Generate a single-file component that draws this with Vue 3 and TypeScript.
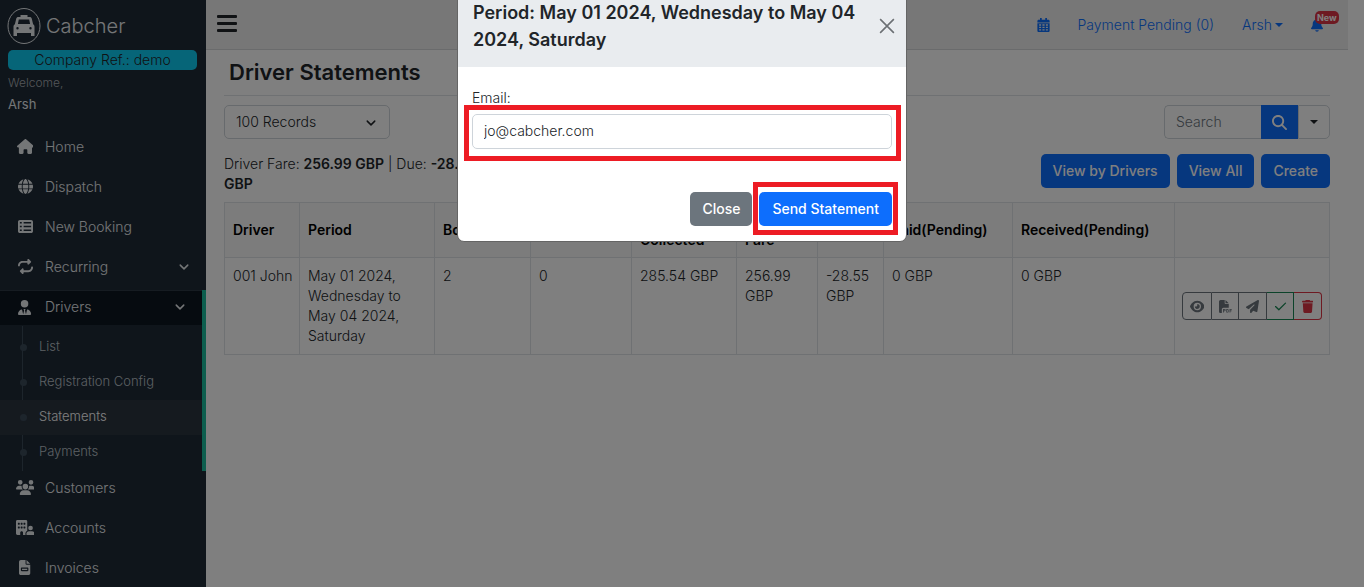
<script setup lang="ts">
import { ref } from 'vue'

interface Icon {
  box: string
  d: string
}

interface Column {
  title: string
  share: number
}

const icons: Record<string, Icon> = {
  home: {
    box: '0 0 576 512',
    d: 'M575.8 255.5c0 18-15 32.1-32 32.1h-32l.7 160.2c0 2.7-.2 5.4-.5 8.1V472c0 22.1-17.9 40-40 40H456c-1.1 0-2.2 0-3.3-.1c-1.4 .1-2.8 .1-4.2 .1H416 392c-22.1 0-40-17.9-40-40V448 384c0-17.7-14.3-32-32-32H256c-17.7 0-32 14.3-32 32v64 24c0 22.1-17.9 40-40 40H160 128.1c-1.5 0-3-.1-4.5-.2c-1.2 .1-2.4 .2-3.6 .2H104c-22.1 0-40-17.9-40-40V360c0-.9 0-1.9 .1-2.8V287.6H32c-18 0-32-14-32-32.1c0-9 3-17 10-24L266.4 8c7-7 15-8 22-8s15 2 21 7L564.8 231.5c8 7 12 15 11 24z',
  },
  globe: {
    box: '0 0 512 512',
    d: 'M352 256c0 22.2-1.2 43.6-3.3 64H163.3c-2.2-20.4-3.3-41.8-3.3-64s1.2-43.6 3.3-64H348.7c2.2 20.4 3.3 41.8 3.3 64zm28.8-64H503.9c5.3 20.5 8.1 41.9 8.1 64s-2.8 43.5-8.1 64H380.8c2.1-20.6 3.2-42 3.2-64s-1.1-43.4-3.2-64zm112.6-32H376.7c-10-63.9-29.8-117.4-55.3-151.6c78.3 20.7 142 77.5 171.9 151.6zm-149.1 0H167.7c6.1-36.4 15.5-68.6 27-94.7c10.5-23.6 22.2-40.7 33.5-51.5C239.4 3.2 248.7 0 256 0s16.6 3.2 27.8 13.8c11.3 10.8 23 27.9 33.5 51.5c11.6 26 20.9 58.2 27 94.7zm-209 0H18.6C48.6 85.9 112.2 29.1 190.6 8.4C165.1 42.6 145.3 96.1 135.3 160zM8.1 192H131.2c-2.1 20.6-3.2 42-3.2 64s1.1 43.4 3.2 64H8.1C2.8 299.5 0 278.1 0 256s2.8-43.5 8.1-64zM194.7 446.6c-11.6-26-20.9-58.2-27-94.6H344.3c-6.1 36.4-15.5 68.6-27 94.6c-10.5 23.6-22.2 40.7-33.5 51.5C272.6 508.8 263.3 512 256 512s-16.6-3.2-27.8-13.8c-11.3-10.8-23-27.9-33.5-51.5zM135.3 352c10 63.9 29.8 117.4 55.3 151.6C112.2 482.9 48.6 426.1 18.6 352H135.3zm358.1 0c-30 74.1-93.6 130.9-171.9 151.6c25.5-34.2 45.2-87.7 55.3-151.6H493.4z',
  },
  list: {
    box: '0 0 512 512',
    d: 'M0 96C0 60.7 28.7 32 64 32H448c35.3 0 64 28.7 64 64V416c0 35.3-28.7 64-64 64H64c-35.3 0-64-28.7-64-64V96zM64 104v48h64V104H64zM448 104H192v48H448V104zM64 232v48h64V232H64zM448 232H192v48H448V232zM64 360v48h64V360H64zM448 360H192v48H448V360z',
  },
  repeat: {
    box: '0 0 512 512',
    d: 'M0 224c0 17.7 14.3 32 32 32s32-14.3 32-32c0-53 43-96 96-96H320v32c0 12.9 7.8 24.6 19.8 29.6s25.7 2.2 34.9-6.9l64-64c12.5-12.5 12.5-32.8 0-45.3l-64-64c-9.2-9.2-22.9-11.9-34.9-6.9S320 19.1 320 32V64H160C71.6 64 0 135.6 0 224zm512 64c0-17.7-14.3-32-32-32s-32 14.3-32 32c0 53-43 96-96 96H192V352c0-12.9-7.8-24.6-19.8-29.6s-25.7-2.2-34.9 6.9l-64 64c-12.5 12.5-12.5 32.8 0 45.3l64 64c9.2 9.2 22.9 11.9 34.9 6.9s19.8-16.6 19.8-29.6V448H352c88.4 0 160-71.6 160-160z',
  },
  driver: {
    box: '0 0 448 512',
    d: 'M96 128a128 128 0 1 0 256 0A128 128 0 1 0 96 128zm94.5 200.2l18.6 31L175.8 483.1l-36-146.9c-2-8.1-9.8-13.4-17.9-11.3C51.9 342.4 0 405.8 0 481.3c0 17 13.8 30.7 30.7 30.7H162.5c0 0 0 0 .1 0H168 280h5.5c0 0 0 0 .1 0H417.3c17 0 30.7-13.8 30.7-30.7c0-75.5-51.9-138.9-121.9-156.4c-8.1-2-15.9 3.3-17.9 11.3l-36 146.9L238.9 359.2l18.6-31c6.4-10.7-1.3-24.2-13.7-24.2H224 204.3c-12.4 0-20.1 13.6-13.7 24.2z',
  },
  users: {
    box: '0 0 640 512',
    d: 'M144 0a80 80 0 1 1 0 160A80 80 0 1 1 144 0zM512 0a80 80 0 1 1 0 160A80 80 0 1 1 512 0zM0 298.7C0 239.8 47.8 192 106.7 192h42.7c15.9 0 31 3.5 44.6 9.7c-1.3 7.2-1.9 14.7-1.9 22.3c0 38.2 16.8 72.5 43.3 96c-.2 0-.4 0-.7 0H21.3C9.6 320 0 310.4 0 298.7zM405.3 320c-.2 0-.4 0-.7 0c26.6-23.5 43.3-57.8 43.3-96c0-7.6-.7-15-1.9-22.3c13.6-6.3 28.7-9.7 44.6-9.7h42.7C592.2 192 640 239.8 640 298.7c0 11.8-9.6 21.3-21.3 21.3H405.3zM224 224a96 96 0 1 1 192 0 96 96 0 1 1 -192 0zM128 485.3C128 411.7 187.7 352 261.3 352H378.7C452.3 352 512 411.7 512 485.3c0 14.7-11.9 26.7-26.7 26.7H154.7c-14.7 0-26.7-11.9-26.7-26.7z',
  },
  building: {
    box: '0 0 640 512',
    d: 'M48 0C21.5 0 0 21.5 0 48V464c0 26.5 21.5 48 48 48h96V432c0-26.5 21.5-48 48-48s48 21.5 48 48v80h89.9c-6.3-10.2-9.9-22.2-9.9-35.1c0-46.9 25.8-87.8 64-109.2V271.8 48c0-26.5-21.5-48-48-48H48zM64 240c0-8.8 7.2-16 16-16h32c8.8 0 16 7.2 16 16v32c0 8.8-7.2 16-16 16H80c-8.8 0-16-7.2-16-16V240zm112-16h32c8.8 0 16 7.2 16 16v32c0 8.8-7.2 16-16 16H176c-8.8 0-16-7.2-16-16V240c0-8.8 7.2-16 16-16zm80 16c0-8.8 7.2-16 16-16h32c8.8 0 16 7.2 16 16v32c0 8.8-7.2 16-16 16H272c-8.8 0-16-7.2-16-16V240zM80 96h32c8.8 0 16 7.2 16 16v32c0 8.8-7.2 16-16 16H80c-8.8 0-16-7.2-16-16V112c0-8.8 7.2-16 16-16zm80 16c0-8.8 7.2-16 16-16h32c8.8 0 16 7.2 16 16v32c0 8.8-7.2 16-16 16H176c-8.8 0-16-7.2-16-16V112zM272 96h32c8.8 0 16 7.2 16 16v32c0 8.8-7.2 16-16 16H272c-8.8 0-16-7.2-16-16V112c0-8.8 7.2-16 16-16zM576 272a80 80 0 1 0 -160 0 80 80 0 1 0 160 0zM352 477.1c0 19.3 15.6 34.9 34.9 34.9H605.1c19.3 0 34.9-15.6 34.9-34.9c0-51.4-41.7-93.1-93.1-93.1H445.1c-51.4 0-93.1 41.7-93.1 93.1z',
  },
  invoice: {
    box: '0 0 384 512',
    d: 'M64 0C28.7 0 0 28.7 0 64V448c0 35.3 28.7 64 64 64H320c35.3 0 64-28.7 64-64V160H256c-17.7 0-32-14.3-32-32V0H64zM256 0V128H384L256 0zM96 256c-17.700 0-32 14.300-32 32v64c0 17.700 14.300 32 32 32H288c17.700 0 32-14.300 32-32v-64c0-17.700-14.300-32-32-32zM104 296H280v48H104z',
  },
  calendar: {
    box: '0 0 448 512',
    d: 'M96 0h64v64h128V0h64v64h48c26.500 0 48 21.500 48 48v48H0v-48c0-26.500 21.500-48 48-48h48zM0 192h448v272c0 26.500-21.500 48-48 48H48c-26.500 0-48-21.500-48-48zM64 232v48h72v-48zM184 232v48h80v-48zM312 232v48h72v-48zM64 320v48h72v-48zM184 320v48h80v-48zM312 320v48h72v-48zM64 408v48h72v-48zM184 408v48h80v-48zM312 408v48h72v-48z',
  },
  bell: {
    box: '0 0 448 512',
    d: 'M224 0c-17.7 0-32 14.3-32 32V51.2C119 66 64 130.6 64 208v18.8c0 47-17.3 92.4-48.5 127.6l-7.4 8.3c-8.4 9.4-10.4 22.9-5.3 34.4S19.4 416 32 416H416c12.6 0 24-7.4 29.2-18.9s3.1-25-5.3-34.4l-7.4-8.3C401.3 319.2 384 273.9 384 226.8V208c0-77.4-55-142-128-156.8V32c0-17.7-14.3-32-32-32zm45.3 493.3c12-12 18.7-28.3 18.7-45.3H224 160c0 17 6.7 33.3 18.7 45.3s28.3 18.7 45.3 18.7s33.3-6.7 45.3-18.7z',
  },
  search: {
    box: '0 0 512 512',
    d: 'M416 208c0 45.9-14.9 88.3-40 122.7L502.6 457.4c12.5 12.5 12.5 32.8 0 45.3s-32.8 12.5-45.3 0L330.7 376c-34.4 25.2-76.8 40-122.7 40C93.1 416 0 322.9 0 208S93.1 0 208 0S416 93.1 416 208zM208 352a144 144 0 1 0 0-288 144 144 0 1 0 0 288z',
  },
  eye: {
    box: '0 0 576 512',
    d: 'M288 32c-80.8 0-145.5 36.8-192.6 80.6C48.6 156 17.3 208 2.5 243.7c-3.3 7.9-3.3 16.7 0 24.6C17.3 304 48.6 356 95.4 399.4C142.5 443.2 207.2 480 288 480s145.5-36.8 192.6-80.6c46.8-43.5 78.1-95.4 93-131.1c3.3-7.9 3.3-16.7 0-24.6c-14.9-35.7-46.2-87.7-93-131.1C433.5 68.8 368.8 32 288 32zM144 256a144 144 0 1 1 288 0 144 144 0 1 1 -288 0zm144-64c0 35.3-28.7 64-64 64c-7.1 0-13.9-1.2-20.3-3.3c-5.5-1.8-11.9 1.6-11.7 7.4c.3 6.9 1.3 13.8 3.2 20.7c13.7 51.2 66.4 81.6 117.6 67.9s81.6-66.4 67.9-117.6c-11.1-41.5-47.8-69.4-88.6-71.1c-5.8-.2-9.2 6.1-7.400 11.700c2.1 6.400 3.3 13.200 3.3 20.300z',
  },
  pdf: {
    box: '0 0 512 512',
    d: 'M0 64C0 28.700 28.700 0 64 0H224V128c0 17.700 14.300 32 32 32H384V304H176c-35.300 0-64 28.700-64 64V512H64c-35.300 0-64-28.700-64-64V64zM384 128H256V0L384 128zM160 352h60a44 44 0 0 1 0 88h-28v56h-32zM192 380v32h24a16 16 0 0 0 0-32zM288 352h44a48 48 0 0 1 48 48v48a48 48 0 0 1-48 48h-44zM320 380v88h12a18 18 0 0 0 18-18v-52a18 18 0 0 0-18-18zM416 352h88v30h-56v28h48v30h-48v56h-32z',
  },
  plane: {
    box: '0 0 512 512',
    d: 'M498.1 5.6c10.1 7 15.4 19.1 13.5 31.2l-64 416c-1.5 9.7-7.4 18.2-16 23s-18.9 5.4-28 1.6L284 427.7l-68.5 74.1c-8.9 9.7-22.9 12.9-35.2 8.1S160 493.2 160 480V396.4c0-4 1.5-7.8 4.2-10.7L331.8 202.8c5.8-6.3 5.6-16-.4-22s-15.7-6.4-22-.7L106 360.8 17.7 316.6C7.1 311.3 .3 300.7 0 288.9s5.9-22.8 16.1-28.7l448-256c10.7-6.1 23.9-5.5 34 1.4z',
  },
  check: {
    box: '0 0 16 16',
    d: 'M14.700 3.300a.8.8 0 0 1 0 1.100l-8.200 8.200a.8.8 0 0 1-1.100 0L1.300 8.500a.8.8 0 0 1 1.100-1.100L6 10.900l7.600-7.600a.8.8 0 0 1 1.100 0z',
  },
  trash: {
    box: '0 0 448 512',
    d: 'M135.2 17.7L128 32H32C14.3 32 0 46.3 0 64S14.3 96 32 96H416c17.7 0 32-14.3 32-32s-14.3-32-32-32H320l-7.2-14.3C307.4 6.8 296.3 0 284.2 0H163.8c-12.1 0-23.2 6.8-28.6 17.7zM416 128H32L53.2 467c1.6 25.3 22.6 45 47.9 45H346.9c25.3 0 46.3-19.7 47.9-45L416 128z',
  },
}

const menu = [
  { label: 'Home', icon: 'home' },
  { label: 'Dispatch', icon: 'globe' },
  { label: 'New Booking', icon: 'list' },
  { label: 'Recurring', icon: 'repeat', expandable: true },
  {
    label: 'Drivers',
    icon: 'driver',
    expandable: true,
    children: ['List', 'Registration Config', 'Statements', 'Payments'],
  },
  { label: 'Customers', icon: 'users' },
  { label: 'Accounts', icon: 'building' },
  { label: 'Invoices', icon: 'invoice' },
]

const columns: Column[] = [
  { title: 'Driver', share: 75 },
  { title: 'Period', share: 135 },
  { title: 'Bookings', share: 96 },
  { title: 'Cancelled', share: 101 },
  { title: 'Cash Collected', share: 105 },
  { title: 'Driver Fare', share: 81 },
  { title: 'Due', share: 66 },
  { title: 'Paid(Pending)', share: 129 },
  { title: 'Received(Pending)', share: 162 },
  { title: '', share: 155 },
]
const totalShare = columns.reduce((sum, c) => sum + c.share, 0)

const row = [
  '001 John',
  'May 01 2024, Wednesday to May 04 2024, Saturday',
  '2',
  '0',
  '285.54 GBP',
  '256.99 GBP',
  '-28.55 GBP',
  '0 GBP',
  '0 GBP',
]

const actions = [
  { icon: 'eye', label: 'View', tone: 'grey' },
  { icon: 'pdf', label: 'Download PDF', tone: 'grey' },
  { icon: 'plane', label: 'Send', tone: 'grey' },
  { icon: 'check', label: 'Mark as paid', tone: 'green' },
  { icon: 'trash', label: 'Delete', tone: 'red' },
]

const email = ref('jo@cabcher.com')
const records = ref('100')
const query = ref('')
</script>

<template>
  <div class="page">
    <aside class="sidebar">
      <a class="brand" href="#">
        <svg class="logo" viewBox="0 0 34 38" aria-hidden="true">
          <ellipse cx="17" cy="19" rx="16" ry="17.500" fill="none" stroke="currentColor" />
          <path
            fill="currentColor"
            fill-rule="evenodd"
            d="M13.500 8h7v2h2c1.300 0 2 .6 2.300 1.800l1.300 5.400c1 .5 1.400 1.300 1.400 2.500V29H24v-3H10v3H6.500v-9.300c0-1.200.4-2 1.400-2.500l1.300-5.400C9.500 10.600 10.200 10 11.500 10h2zM11.800 12.500 10.900 17h12.200l-.9-4.500zM10.500 20a1.200 1.200 0 1 0 0 2.400 1.200 1.200 0 0 0 0-2.400zM23.500 20a1.200 1.200 0 1 0 0 2.400 1.200 1.200 0 0 0 0-2.400z"
          />
        </svg>
        <span>Cabcher</span>
      </a>
      <div class="company">Company Ref.: demo</div>
      <div class="welcome">Welcome,</div>
      <div class="user">Arsh</div>

      <nav aria-label="Main">
        <ul class="menu">
          <li v-for="item in menu" :key="item.label" :class="{ open: item.children }">
            <a class="menu-link" href="#">
              <span class="menu-icon">
                <svg :viewBox="icons[item.icon].box"><path fill-rule="evenodd" :d="icons[item.icon].d" /></svg>
              </span>
              <span class="menu-label">{{ item.label }}</span>
              <svg v-if="item.expandable" class="chevron" viewBox="0 0 16 16"><path d="M3 5.500l5 5 5-5" /></svg>
            </a>
            <ul v-if="item.children" class="submenu">
              <li v-for="child in item.children" :key="child">
                <a href="#" :class="{ current: child === 'Statements' }">{{ child }}</a>
              </li>
            </ul>
          </li>
        </ul>
      </nav>
    </aside>

    <div class="main">
      <header class="topbar">
        <button class="burger" type="button" aria-label="Toggle menu"><i></i><i></i><i></i></button>
        <div class="top-links">
          <a href="#" aria-label="Calendar">
            <svg class="calendar" :viewBox="icons.calendar.box"><path fill-rule="evenodd" :d="icons.calendar.d" /></svg>
          </a>
          <a href="#">Payment Pending (0)</a>
          <a href="#" class="account">Arsh<i class="caret"></i></a>
          <a href="#" class="bell">
            <svg :viewBox="icons.bell.box"><path :d="icons.bell.d" /></svg>
            <span class="badge">New</span>
          </a>
        </div>
      </header>

      <main class="content">
        <h1>Driver Statements</h1>

        <div class="row filters">
          <div class="select">
            <select v-model="records" aria-label="Records per page">
              <option value="100">100 Records</option>
            </select>
            <svg class="chevron" viewBox="0 0 16 16"><path d="M3 5.500l5 5 5-5" /></svg>
          </div>
          <form class="search" @submit.prevent>
            <input v-model="query" type="text" placeholder="Search" aria-label="Search" />
            <button class="go" type="submit" aria-label="Search">
              <svg :viewBox="icons.search.box"><path :d="icons.search.d" /></svg>
            </button>
            <button class="more" type="button" aria-label="Search options"><i class="caret"></i></button>
          </form>
        </div>

        <div class="row">
          <p class="summary">
            <span>Driver Fare:</span> <b>256.99 GBP</b> <span>| Due:</span> <b>-28.55</b> <b>GBP</b>
          </p>
          <div class="buttons">
            <button class="btn primary" type="button">View by Drivers</button>
            <button class="btn primary" type="button">View All</button>
            <button class="btn primary" type="button">Create</button>
          </div>
        </div>

        <table>
          <colgroup>
            <col v-for="(c, i) in columns" :key="i" :style="{ width: (c.share / totalShare) * 100 + '%' }" />
          </colgroup>
          <thead>
            <tr>
              <th v-for="(c, i) in columns" :key="i" scope="col">{{ c.title }}</th>
            </tr>
          </thead>
          <tbody>
            <tr>
              <td v-for="(cell, i) in row" :key="i">{{ cell }}</td>
              <td class="actions">
                <div class="group">
                  <button v-for="a in actions" :key="a.icon" type="button" :class="[a.tone, a.icon]" :aria-label="a.label">
                    <svg :viewBox="icons[a.icon].box"><path fill-rule="evenodd" :d="icons[a.icon].d" /></svg>
                  </button>
                </div>
              </td>
            </tr>
          </tbody>
        </table>
      </main>
    </div>
  </div>

  <div class="backdrop">
    <section class="modal" role="dialog" aria-modal="true" aria-labelledby="modal-title">
      <header class="modal-head">
        <h2 id="modal-title">Period: May 01 2024, Wednesday to May 04 2024, Saturday</h2>
        <button class="close" type="button" aria-label="Close dialog">
          <svg viewBox="0 0 14 14"><path d="M1 1l12 12M13 1L1 13" /></svg>
        </button>
      </header>
      <div class="modal-body">
        <label for="email">Email:</label>
        <div class="field marked">
          <input id="email" v-model="email" type="text" />
        </div>
      </div>
      <footer class="modal-foot">
        <button class="btn secondary" type="button">Close</button>
        <div class="marked">
          <button class="btn primary send" type="button">Send Statement</button>
        </div>
      </footer>
    </section>
  </div>
</template>

<style>
body {
  margin: 0;
  overflow: hidden;
}
</style>

<style scoped>
* {
  box-sizing: border-box;
}

.page,
.backdrop {
  font-family: Inter, 'Liberation Sans', sans-serif;
  font-size: 14px;
  font-weight: 300;
  line-height: 20px;
  color: #212529;
}

.page {
  display: flex;
  height: 100vh;
  padding-right: 16px;
  background: #fff;
}

button,
input,
select {
  font: inherit;
  color: inherit;
  margin: 0;
}

a {
  text-decoration: none;
  color: inherit;
}

ul {
  list-style: none;
  margin: 0;
  padding: 0;
}

svg {
  display: block;
  fill: currentColor;
}

.chevron {
  width: 12px;
  height: 12px;
  fill: none;
  stroke: currentColor;
  stroke-width: 2;
  stroke-linecap: round;
  stroke-linejoin: round;
}

.caret {
  display: inline-block;
  border: 4px solid transparent;
  border-top-color: currentColor;
  border-bottom-width: 0;
}

/* sidebar */
.sidebar {
  flex: 0 0 206px;
  background: #1e2a36;
  color: #e9ecef;
  overflow: hidden;
}

.brand {
  display: flex;
  align-items: center;
  gap: 5px;
  padding: 7px 7px 5px;
  font-size: 20px;
  line-height: 38px;
}

.logo {
  width: 34px;
  height: 38px;
}

.company {
  margin: 0 9px 0 8px;
  border-radius: 5px;
  background: #0dcaf0;
  color: #212529;
  text-align: center;
}

.welcome {
  padding: 3px 8px 0;
  font-size: 12px;
  color: #a7acb1;
}

.user {
  padding: 1px 8px;
  font-size: 13px;
  font-weight: 400;
}

.menu {
  padding-top: 15px;
}

.menu > li {
  margin-bottom: 5px;
}

.menu-link {
  display: flex;
  align-items: center;
  height: 35px;
  padding: 0 16px 2px 13px;
}

.menu-icon {
  display: flex;
  justify-content: center;
  width: 24px;
  margin-right: 8px;
}

.menu-icon svg {
  height: 15px;
}

.menu-label {
  flex: 1;
}

.menu > li.open {
  margin-bottom: 0;
  border-right: 4px solid #1abc9c;
}

.open .menu-link {
  background: #0c1621;
  border-top: 1px solid #2c3845;
}

.submenu {
  position: relative;
  padding: 5px 0 1px;
  font-size: 13px;
  color: #b9c0c7;
}

.submenu::before {
  content: '';
  position: absolute;
  left: 22px;
  top: 1px;
  bottom: 0;
  width: 1px;
  background: #3b4a59;
}

.submenu a {
  position: relative;
  display: block;
  padding: 0 0 2px 39px;
  line-height: 33px;
}

.submenu a::before {
  content: '';
  position: absolute;
  left: 20px;
  top: 14px;
  width: 7px;
  height: 7px;
  border-radius: 50%;
  background: #3b4a59;
}

.submenu a.current {
  background: #2b343f;
  color: #fff;
}

/* top bar */
.main {
  flex: 1;
  min-width: 0;
}

.topbar {
  display: flex;
  justify-content: space-between;
  align-items: center;
  height: 50px;
  padding: 0 25px 0 11px;
  background: #eeeeee;
  border-bottom: 1px solid #d4d6d8;
}

.burger {
  display: flex;
  flex-direction: column;
  gap: 4px;
  padding: 0 0 2px;
  border: 0;
  background: none;
}

.burger i {
  width: 20px;
  height: 3px;
  border-radius: 1px;
  background: #212529;
}

.top-links {
  display: flex;
  align-items: center;
  gap: 28px;
  color: #0d6efd;
}

.calendar {
  width: 13px;
  height: 14px;
}

.account .caret {
  margin-left: 3px;
  vertical-align: 3px;
}

.bell {
  position: relative;
  color: #0d6efd;
}

.bell svg {
  width: 12px;
  height: 14px;
}

.badge {
  position: absolute;
  left: 4px;
  top: -7px;
  padding: 0 2px;
  border-radius: 5px;
  background: #dc3545;
  color: #fff;
  font-size: 9px;
  font-weight: 700;
  line-height: 13px;
}

/* content */
.content {
  padding: 5px 18px;
}

h1 {
  margin: 0 0 9px;
  padding: 1px 5px 6px;
  border-bottom: 1px solid #dee2e6;
  font-size: 22px;
  line-height: 33px;
  font-weight: 600;
}

.row {
  display: flex;
  justify-content: space-between;
  align-items: flex-start;
}

.filters {
  margin-bottom: 15px;
}

.select {
  position: relative;
  width: 15%;
}

.select select {
  appearance: none;
  width: 100%;
  height: 34px;
  padding: 0 11px;
  border: 1px solid #ced4da;
  border-radius: 5px;
  background: #fff;
}

.select .chevron {
  position: absolute;
  right: 13px;
  top: 12px;
  pointer-events: none;
}

.search {
  display: flex;
  height: 34px;
}

.search input {
  width: 97px;
  padding: 0 11px;
  border: 1px solid #ced4da;
  border-right: 0;
  border-radius: 5px 0 0 5px;
  background: #fff;
}

.search input::placeholder {
  color: #6c757d;
}

.go {
  display: flex;
  align-items: center;
  justify-content: center;
  width: 37px;
  padding: 0;
  border: 0;
  background: #0d6efd;
  color: #fff;
}

.go svg {
  width: 15px;
  height: 15px;
}

.more {
  width: 32px;
  padding: 0;
  border: 1px solid #ced4da;
  border-radius: 0 5px 5px 0;
  background: #fff;
}

.more .caret {
  vertical-align: 3px;
}

.summary {
  width: 25%;
  margin: 0 0 8px;
}

.summary b {
  font-weight: 600;
}

.buttons {
  display: flex;
  gap: 7px;
}

.btn {
  height: 34px;
  padding: 0 12px;
  border: 0;
  border-radius: 5px;
  color: #fff;
  font-weight: 500;
}

.btn.primary {
  background: #0d6efd;
}

.btn.secondary {
  background: #6c757d;
}

.btn.send {
  padding: 0 13px;
}

table {
  width: 100%;
  table-layout: fixed;
  border-collapse: collapse;
}

th,
td {
  border: 1px solid #dee2e6;
  text-align: left;
}

th {
  padding: 7px 6px 7px 8px;
  background: #f8f8f8;
  color: #000;
  font-weight: 600;
}

td {
  padding: 8px 6px 8px 8px;
  vertical-align: top;
}

td.actions {
  padding: 8px 7px;
  vertical-align: middle;
}

.group {
  display: flex;
}

.group button {
  flex: 1;
  display: flex;
  align-items: center;
  justify-content: center;
  height: 28px;
  padding: 0;
  border: 1px solid currentColor;
  border-left-width: 0;
  background: none;
}

.group button:first-child {
  flex: 0 0 30px;
  border-left-width: 1px;
  border-radius: 4px 0 0 4px;
}

.group button:last-child {
  border-radius: 0 4px 4px 0;
}

.group svg {
  height: 13px;
}

.group .grey {
  color: #6c757d;
}

.group .green {
  color: #198754;
}

.group .red {
  color: #dc3545;
}

/* dialog */
.backdrop {
  position: fixed;
  inset: 0;
  display: flex;
  justify-content: center;
  align-items: flex-start;
  background: rgba(0, 0, 0, 0.5);
}

.modal {
  width: 450px;
  margin-top: -16px;
  border: 1px solid #656565;
  border-radius: 7px;
  background: #fff;
  overflow: hidden;
}

.modal-head {
  display: flex;
  justify-content: space-between;
  align-items: center;
  padding: 14px 11px 14px 15px;
  background: #e9ecef;
}

h2 {
  margin: 0;
  font-size: 18px;
  line-height: 27px;
  font-weight: 600;
}

.close {
  padding: 0;
  border: 0;
  background: none;
  color: #6c7074;
}

.close svg {
  width: 16px;
  height: 16px;
  stroke: currentColor;
  stroke-width: 1.4;
}

.modal-body {
  padding: 21px 14px 0;
}

.modal-body label {
  display: block;
  margin-bottom: 6px;
}

.field input {
  display: block;
  width: 100%;
  height: 35px;
  padding: 0 11px 2px;
  border: 1px solid #ced4da;
  border-radius: 5px;
  background: #fff;
  color: #212529;
}

.marked {
  position: relative;
}

.marked::after {
  content: '';
  position: absolute;
  inset: -10px -6px -9px;
  border: 5px solid #ed1c24;
  pointer-events: none;
}

.field.marked::after {
  inset: -9px -9px -12px -8px;
}

.modal-foot {
  display: flex;
  justify-content: flex-end;
  gap: 7px;
  padding: 43px 14px 15px;
}
</style>
